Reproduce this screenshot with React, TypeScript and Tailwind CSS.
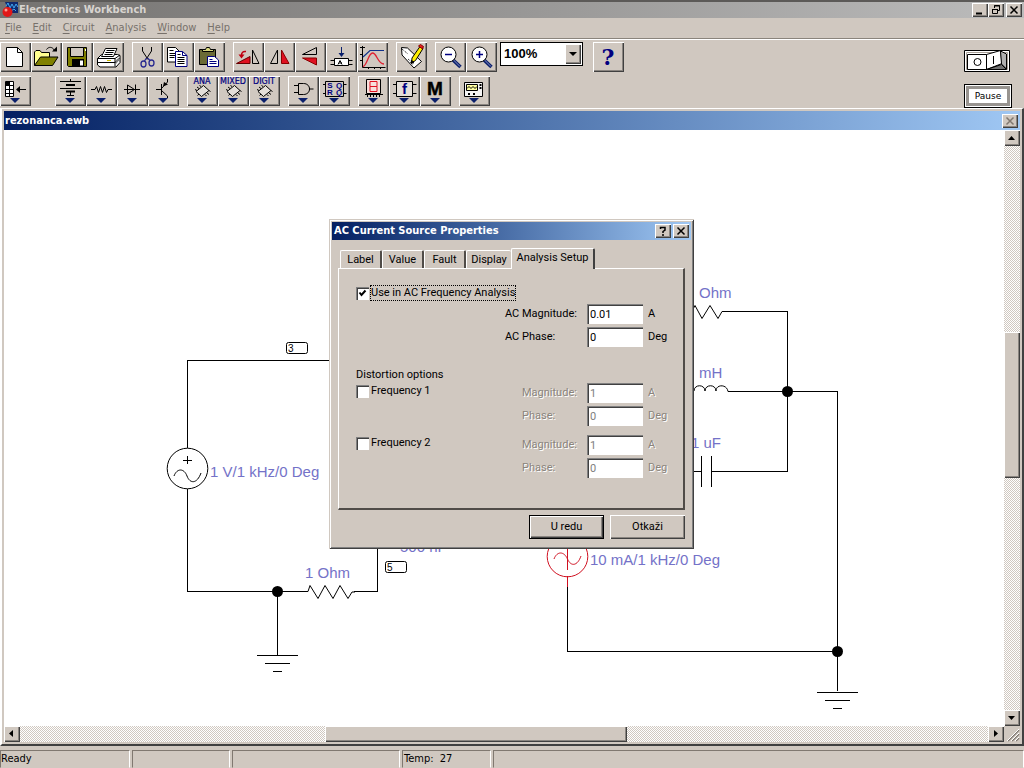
import { useId, useState } from 'react';
import type { ReactNode } from 'react';

const RAISED =
  'bg-[#d0c8c0] shadow-[inset_1px_1px_0_#fff,inset_-1px_-1px_0_#404040,inset_-2px_-2px_0_#8a8580]';
const UI_FONT = "font-['DejaVu_Sans_Condensed',Tahoma,sans-serif]";
const DITHER =
  'bg-[repeating-conic-gradient(#ffffff_0_25%,#d0c8c0_0_50%)] bg-[length:2px_2px]';

function Tool({ label, children }: { label: string; children: ReactNode }) {
  return (
    <button type="button" aria-label={label} className={`h-[30px] w-[31px] shrink-0 ${RAISED}`}>
      <svg viewBox="0 0 31 30" className="block h-[30px] w-[31px]" fill="none" stroke="#000" strokeWidth="1">
        {children}
      </svg>
    </button>
  );
}

function PartTool({ label, children }: { label: string; children: ReactNode }) {
  return (
    <Tool label={label}>
      {children}
      <path d="M10 22h10l-5 5z" fill="#0a1f6b" stroke="none" />
    </Tool>
  );
}

function Group({ children }: { children: ReactNode }) {
  return <div className="flex">{children}</div>;
}

function Chip({ caption }: { caption: string }) {
  return (
    <>
      <text x="15" y="8" textAnchor="middle" fontSize="8" fill="#000080" stroke="#000080" strokeWidth="0.200" fontFamily="DejaVu Sans">
        {caption}
      </text>
      <path d="M16.500 9.500l5.500 5-7.500 6-5.500-5z" fill="#e4dfda" />
      <path d="M12 12.500l-2-1.500M10 14.500l-2-1M14 10.500l-1.500-1M20 17l2 1.500M22 14.500l1.500 1M18 18.500l1.500 1.500M12 18l-1.500 1.500" />
    </>
  );
}

function MainTools() {
  return (
    <div className="flex gap-2">
      <Group>
        <Tool label="New">
          <path d="M6.500 5.500h11l5 5v14h-16z" fill="#fff" />
          <path d="M17.500 5.500v5h5" />
        </Tool>
        <Tool label="Open">
          <path d="M3.500 23.500V10l1.500-1.500h4l1.500 2h8v5" fill="#ffff90" />
          <path d="M3.500 23.500l6-8.500h17.500l-5.500 8.500z" fill="#808000" />
          <path d="M15.500 7.500c2-3 6-3 8 1" />
          <path d="M26 4.500v5h-5z" fill="#000" stroke="none" />
        </Tool>
        <Tool label="Save">
          <path d="M5.500 5.500h19v19h-18l-1-1z" fill="#808000" />
          <path d="M8.500 5.500h13v9h-13z" fill="#d0c8c0" />
          <path d="M10 17h12v7.500H10z" fill="#000" stroke="none" />
          <path d="M18 18.500h3v5h-3zM23 7h1v2h-1z" fill="#fff" stroke="none" />
        </Tool>
        <Tool label="Print">
          <path d="M4.500 16.500l4-4h16l2.500 1v7l-4 4.500h-16l-2.500-2z" fill="#fff" />
          <path d="M4.500 16.500h17.500l5-3.500M22 16.500v8" />
          <path d="M8.500 14.500l4-8h11.500l-3.500 8z" fill="#fff" />
          <path d="M13.500 8.500h8M12.500 10.500h8M11.500 12.500h8" />
          <path d="M5 20.500h17l4.500-4" />
          <path d="M23 18l3-2.500v3L23 22z" fill="#808080" stroke="none" />
          <path d="M14 18.500h4" stroke="#d0c000" />
        </Tool>
      </Group>
      <Group>
        <Tool label="Cut">
          <path d="M10.500 5v4l5.500 8.500M19.500 5v4l-5.500 8.500" />
          <g stroke="#2a2a90" strokeWidth="1.300">
            <path d="M15.500 16l2.500 2.500M14.500 16l-2 3" />
            <ellipse cx="11.500" cy="22" rx="2.500" ry="3" />
            <ellipse cx="19.500" cy="21" rx="2.500" ry="3" />
          </g>
        </Tool>
        <Tool label="Copy">
          <path d="M4.500 5.500h8l3.500 3.500v11H4.500z" fill="#fff" />
          <path d="M6.500 8.500h4M6.500 11.500h7M6.500 13.500h7M6.500 15.500h5" />
          <path d="M12.500 9.500h7l4.500 4v11H12.500z" fill="#fff" stroke="#000080" />
          <path d="M19.500 9.500v4h4.500" stroke="#000080" />
          <path d="M14.500 12.500h3M14.500 15.500h7M14.500 17.500h7M14.500 19.500h7M14.500 21.500h7" />
        </Tool>
        <Tool label="Paste">
          <path d="M5.500 7.500h16v15h-16z" fill="#6b6b35" />
          <path d="M8.500 9.500v-2h3l1-2h3l1 2h3v2z" fill="#d8d880" />
          <path d="M13.500 14.500h7l4 3.500v6.500h-11z" fill="#fff" stroke="#000080" />
          <path d="M15.500 17.500h3M15.500 19.500h7M15.500 21.500h7" stroke="#000080" />
        </Tool>
      </Group>
      <Group>
        <Tool label="Rotate">
          <path d="M3.500 21.500l13.500-7v7z" fill="#e01020" stroke="#600" />
          <path d="M19.500 8v13.500h6.500z" />
          <path d="M13 9.500c-3-.5-4.500 1-4.500 4" stroke="#c00010" strokeWidth="1.500" />
          <path d="M5.500 12.500h6l-3 4z" fill="#c00010" stroke="none" />
        </Tool>
        <Tool label="Flip Horizontal">
          <path d="M13.500 8v13.500h-7z" />
          <path d="M17.500 8v13.500h7.500z" fill="#e01020" stroke="#800" />
        </Tool>
        <Tool label="Flip Vertical">
          <path d="M21.500 5.500v7h-14z" />
          <path d="M21.500 23v-7h-14z" fill="#e01020" stroke="#800" />
        </Tool>
        <Tool label="Component Properties">
          <path d="M15.500 5v8" stroke="#0a1f6b" />
          <path d="M12.500 11h6l-3 4z" fill="#0a1f6b" stroke="none" />
          <path d="M8.500 16.500h14v7h-14zM4.500 18.500h4M4.500 22.500h4M22.500 18.500h4M22.500 22.500h4" fill="#fff" />
          <path d="M12 22.500l2-4 2 4M13 21h3" />
        </Tool>
        <Tool label="Display Graphs">
          <path d="M5.500 4v21.500h23M3 5.500h5M3 12.500h2M3 18.500h2M11.500 25v2M17.500 25v2M23.500 25v2" />
          <path d="M6 15l7-6.500h14" stroke="#10308a" strokeWidth="1.200" />
          <path d="M6 24.500c4-1 5.500-13.500 9.500-13.500 4.500 0 5 11 11.500 11" stroke="#e02030" strokeWidth="1.300" />
        </Tool>
      </Group>
      <Group>
        <Tool label="Description">
          <path d="M5.500 5.500l6 .5 14 13.500-7.500 6.500L6 13z" fill="#fff" />
          <path d="M6 7l6 5M12 17l6 5M14 20l3 3" strokeDasharray="1 1" />
          <path d="M24 4.500l3 2-7.500 12-4 2.500.5-5z" fill="#ffef00" />
          <path d="M22.500 4l2-1.500 3 2-1 2.500z" fill="#e02020" stroke="#800" />
          <path d="M15.500 18.500v3l2.500-1.500z" fill="#000" />
        </Tool>
      </Group>
      <div className="mr-0.5 flex gap-[3px]">
        <Group>
          <Tool label="Zoom Out">
            <path d="M17.500 17.500l8 7.500" stroke="#0a1f6b" strokeWidth="3.500" />
            <path d="M18 17.500l7 7" stroke="#8890c8" />
            <circle cx="13.500" cy="12.500" r="7.500" fill="#fff" />
            <path d="M10 12.500h7" stroke="#000080" strokeWidth="1.500" />
          </Tool>
          <Tool label="Zoom In">
            <path d="M17.500 17.500l8 7.500" stroke="#0a1f6b" strokeWidth="3.500" />
            <path d="M18 17.500l7 7" stroke="#8890c8" />
            <circle cx="13.500" cy="12.500" r="7.500" fill="#fff" />
            <path d="M10 12.500h7M13.500 9v7" stroke="#000080" strokeWidth="1.500" />
          </Tool>
        </Group>
        <div className="relative h-6 w-[83px]">
          <select
            aria-label="Zoom"
            className="block h-6 w-full appearance-none border border-black bg-white pl-[3px] font-['Liberation_Sans',sans-serif] text-[13px] leading-4 font-bold text-black"
          >
            <option>100%</option>
            <option>80%</option>
            <option>50%</option>
          </select>
          <span className={`pointer-events-none absolute top-0.5 right-0.5 flex h-5 w-4 items-center justify-center ${RAISED}`}>
            <svg viewBox="0 0 8 4" className="h-1 w-2">
              <path d="M0 0h8L4 4z" />
            </svg>
          </span>
        </div>
      </div>
      <Tool label="Help">
        <text x="15" y="23" textAnchor="middle" fontSize="22" fontWeight="700" fill="#000080" stroke="none" fontFamily="DejaVu Serif">
          ?
        </text>
      </Tool>
    </div>
  );
}

function PartTools() {
  return (
    <div className="flex gap-2">
      <div className="mr-4">
        <PartTool label="Favorites">
          <path d="M5.500 5.500h8v15h-8zM9.500 5.500v15M5.500 9.500h8M5.500 13.500h8M5.500 17.500h8" fill="#fff" />
          <path d="M6 6h3v3H6z" fill="#000" />
          <path d="M18 13.500h8" />
          <path d="M16 13.500l4-3.500v7z" fill="#000" stroke="none" />
        </PartTool>
      </div>
      <Group>
        <PartTool label="Sources">
          <path d="M15.500 3v2.500M5 5.500h21M5 12.500h21M15.500 15v4" />
          <path d="M11 9h9M11 15.500h9" strokeWidth="2" />
          <path d="M12 19.500h7" />
        </PartTool>
        <PartTool label="Basic">
          <path d="M5 13.500h4l1.500-3 2 6 2-6 2 6 2-6 2 6 1.500-3h4" />
        </PartTool>
        <PartTool label="Diodes">
          <path d="M7 13.500h16M10.500 9v9l7-4.500zM18.500 8.500v10" />
        </PartTool>
        <PartTool label="Transistors">
          <path d="M13.500 8v11M8 13.500h5.500M13.500 12.500l6-6.500V3M13.500 14.500l6 5.500v2" />
          <path d="M15 10.500l1-4.500 4 2.500z" fill="#000" stroke="none" />
        </PartTool>
      </Group>
      <Group>
        <PartTool label="Analog ICs"><Chip caption="ANA" /></PartTool>
        <PartTool label="Mixed ICs"><Chip caption="MIXED" /></PartTool>
        <PartTool label="Digital ICs"><Chip caption="DIGIT" /></PartTool>
      </Group>
      <Group>
        <PartTool label="Logic Gates">
          <path d="M10.500 7.500h5c8 0 8 11 0 11h-5zM6 9.500h4.500M6 16.500h4.500M21.500 13h4" />
        </PartTool>
        <PartTool label="Digital">
          <path d="M6.500 5.500h18v15h-18zM4 8.500h2.500M4 17.500h2.500M24.500 8.500h3M24.500 17.500h3" />
          <g fontSize="8" fontWeight="700" fill="#000080" stroke="none" fontFamily="Liberation Sans" textAnchor="middle">
            <text x="11" y="12">S</text>
            <text x="20" y="12">Q</text>
            <text x="11" y="19">R</text>
            <text x="20" y="19">Q</text>
          </g>
        </PartTool>
      </Group>
      <Group>
        <PartTool label="Indicators">
          <path d="M8.500 3.500h14v14h-14z" fill="#f8e0dc" />
          <path d="M12 5.500h7v5h-7zM12 10.500h7v5h-7z" stroke="#e01020" />
          <path d="M7 18.500h18M9.500 19v2M12.500 19v2M15.500 19v2M18.500 19v2M21.500 19v2" />
        </PartTool>
        <PartTool label="Controls">
          <path d="M7.500 5.500h16v15h-16zM4 8.500h3.500M4 17.500h3.500M23.500 8.500h4M23.500 17.500h4" fill="#e4dfda" />
          <text x="15.500" y="18" textAnchor="middle" fontSize="15" fontWeight="700" fill="#000080" stroke="none" fontFamily="Liberation Sans">
            f
          </text>
        </PartTool>
        <PartTool label="Miscellaneous">
          <text x="15" y="19" textAnchor="middle" fontSize="19" fontWeight="700" fill="#000" stroke="#000" strokeWidth="0.500" fontFamily="Liberation Sans">
            M
          </text>
        </PartTool>
      </Group>
      <PartTool label="Instruments">
        <path d="M5.500 6.500h18v14h-18z" fill="#f4f4f4" />
        <path d="M7.500 8.500h11v6h-11z" fill="#ffffa0" />
        <path d="M8 12.500l2-2 2 2 2-2 2 2 2-2" />
        <path d="M20.500 9h2M20.500 12h2M9 18h2M14 18h2" strokeWidth="2" />
      </PartTool>
    </div>
  );
}

function CaptionButton({ label, children, muted }: { label: string; children: ReactNode; muted?: boolean }) {
  return (
    <button type="button" aria-label={label} className={`h-3.5 w-4 shrink-0 ${RAISED}`}>
      <svg viewBox="0 0 16 14" className="block h-3.5 w-4" fill="none" stroke={muted ? '#807870' : '#000'}>
        {children}
      </svg>
    </button>
  );
}

const CROSS = <path d="M4.500 3.500l7 7M11.500 3.500l-7 7" strokeWidth="1.500" />;

function ScrollArrow({ label, d }: { label: string; d: string }) {
  return (
    <button type="button" aria-label={label} className={`h-4 w-4 shrink-0 ${RAISED}`}>
      <svg viewBox="0 0 16 16" className="block h-4 w-4">
        <path d={d} />
      </svg>
    </button>
  );
}

function Circuit() {
  return (
    <svg
      viewBox="4 130 1000 596"
      className="block h-[596px] w-[1000px] shrink-0"
      fill="none"
      stroke="#000"
      strokeWidth="1"
      fontFamily="Liberation Sans, Arial, sans-serif"
    >
      <g shapeRendering="crispEdges">
        <path d="M340 360.500H187.500V448M187.500 489v102.500H308M354 591.500h23.500V540M277.500 591v64M257 655.500h41M265 663.500h25M273 671.500h9" />
        <path d="M725 311.500h62.500v160H712M728 391.500h109.500V691M817 692.500h41M825 700.500h25M833 708.500h9M680 471.500h21M701.500 456v31M711.500 456v31M567.500 587v64.500H837" />
        <path d="M187.500 456v8M183 460.500h9" />
        <path d="M567.500 540v30M567.500 576v11" stroke="#d01020" />
      </g>
      <path d="M308 591.500l2-6 8 13 7-13 8 13 7-13 8 13 4-6.500h3M678 311.500l2-6 8 13 7-13 7 13 8-13 8 13 4-7h3" />
      <path d="M694 391c0-7 11-7 11 0c0-7 11-7 11 0c0-7 11-7 12 .5" />
      <circle cx="187.500" cy="468.500" r="20.300" />
      <path d="M174 476c3-8 10-8 13 0s10 8 14-3" />
      <g stroke="#d01020">
        <circle cx="567.500" cy="556.500" r="20.300" />
        <path d="M554 559c3-8 10-8 13.500 0s10 7 13.500-3" />
      </g>
      <g fill="#000" stroke="none">
        <circle cx="277.500" cy="591.500" r="5.500" />
        <circle cx="787.500" cy="391.500" r="5.500" />
        <circle cx="837.500" cy="651.500" r="5.500" />
      </g>
      <rect x="286.500" y="342.500" width="21" height="11" rx="2" />
      <rect x="385.500" y="561.500" width="21" height="11" rx="2" />
      <g fill="#000" stroke="none" fontSize="10">
        <text x="288" y="352">3</text>
        <text x="387" y="571">5</text>
      </g>
      <g fill="#7472c8" stroke="none" fontSize="15" className="whitespace-pre">
        <text x="210" y="477">1 V/1 kHz/0 Deg</text>
        <text x="305" y="578">{'1  Ohm'}</text>
        <text x="400" y="552">500 nF</text>
        <text x="590" y="565">10 mA/1 kHz/0 Deg</text>
        <text x="699" y="298">Ohm</text>
        <text x="699" y="378">mH</text>
        <text x="691" y="448">1 uF</text>
      </g>
    </svg>
  );
}

function Field({ label, unit, value, disabled, wide }: { label: string; unit: string; value: string; disabled?: boolean; wide?: boolean }) {
  const id = useId();
  const tone = disabled ? 'text-[#8a847c] [text-shadow:1px_1px_0_#fff]' : 'text-black';
  return (
    <div className="flex h-5 items-center">
      <label htmlFor={id} className={`${wide ? 'w-[82px]' : 'w-[65px]'} whitespace-nowrap ${tone}`}>
        {label}
      </label>
      <input
        id={id}
        type="text"
        defaultValue={value}
        disabled={disabled}
        className={`h-5 w-14 bg-white pl-[3px] shadow-[inset_1px_1px_0_#808080,inset_2px_2px_0_#404040,inset_-1px_-1px_0_#fff] ${
          disabled ? 'text-[#808080]' : 'text-black'
        }`}
      />
      <span className={`w-10 pl-[5px] ${tone}`}>{unit}</span>
    </div>
  );
}

function Check({ label, checked, focused }: { label: string; checked?: boolean; focused?: boolean }) {
  return (
    <label className="flex h-4 items-center gap-px">
      <span className="relative block h-[13px] w-[13px]">
        <input
          type="checkbox"
          defaultChecked={checked}
          className="peer block h-[13px] w-[13px] appearance-none bg-white shadow-[inset_1px_1px_0_#808080,inset_2px_2px_0_#404040,inset_-1px_-1px_0_#fff]"
        />
        <svg viewBox="0 0 13 13" className="pointer-events-none absolute inset-0 hidden h-[13px] w-[13px] peer-checked:block" fill="none">
          <path d="M3.500 5.500L5.500 8l4-4.500" stroke="#000" strokeWidth="2" />
        </svg>
      </span>
      <span className={`border border-dotted leading-[14px] whitespace-nowrap ${focused ? 'border-black' : 'border-transparent'}`}>{label}</span>
    </label>
  );
}

const TABS = ['Label', 'Value', 'Fault', 'Display', 'Analysis Setup'];

function PropertiesDialog() {
  const [tab, setTab] = useState('Analysis Setup');
  return (
    <section
      role="dialog"
      aria-labelledby="dialog-title"
      className="absolute top-[219px] left-[329px] w-[365px] bg-[#d0c8c0] p-[3px] pb-2.5 font-[Roboto,'Liberation_Sans',Arial,sans-serif] text-[11px] leading-4 text-black shadow-[inset_1px_1px_0_#d0c8c0,inset_-1px_-1px_0_#404040,inset_2px_2px_0_#fff,inset_-2px_-2px_0_#808080]"
    >
      <header className="flex h-[18px] items-center gap-0.5 bg-linear-to-r from-[#051f62] to-[#a0c8f4] pr-0.5 pl-0.5">
        <h2 id="dialog-title" className={`flex-1 text-[11px] font-bold text-white ${UI_FONT}`}>
          AC Current Source Properties
        </h2>
        <CaptionButton label="Context help">
          <path d="M5.500 5V3.500h4.500V6L8 7.500V9M8 10v2" strokeWidth="1.500" />
        </CaptionButton>
        <CaptionButton label="Close">{CROSS}</CaptionButton>
      </header>
      <div className="px-1.5">
        <div role="tablist" className="flex h-7 items-end pl-0.5">
          {TABS.map((name) => {
            const on = name === tab;
            return (
              <button
                key={name}
                type="button"
                role="tab"
                aria-selected={on}
                onClick={() => setTab(name)}
                className={`rounded-t-[2px] border-t border-l border-white bg-[#d0c8c0] ${
                  on
                    ? 'relative -mb-px h-[21px] w-[84px] border-r-2 border-r-[#404040] pb-0.5'
                    : name === 'Display'
                      ? 'h-[18px] w-[45px]'
                      : 'h-[18px] w-[42px] border-r-2 border-r-[#504c48]'
                }`}
              >
                {name}
              </button>
            );
          })}
        </div>
        <div role="tabpanel" className="border border-r-2 border-b-2 border-white border-r-[#504c48] border-b-[#504c48] pt-4 pb-[21px] pl-[17px]">
          <Check label="Use in AC Frequency Analysis" checked focused />
          <div className="mt-[3px] flex flex-col items-end gap-[3px]">
            <Field wide label="AC Magnitude:" unit="A" value="0.01" />
            <Field wide label="AC Phase:" unit="Deg" value="0" />
          </div>
          <p className="mt-5">Distortion options</p>
          {['Frequency 1', 'Frequency 2'].map((name) => (
            <div key={name} className="mb-[9px] flex justify-between">
              <Check label={name} />
              <div className="flex flex-col gap-[3px]">
                <Field disabled label="Magnitude:" unit="A" value="1" />
                <Field disabled label="Phase:" unit="Deg" value="0" />
              </div>
            </div>
          ))}
        </div>
        <div className="mt-[5px] flex justify-end gap-1.5">
          <button type="button" className="h-6 w-[75px] border border-black bg-[#d0c8c0] shadow-[inset_1px_1px_0_#fff,inset_-1px_-1px_0_#404040,inset_-2px_-2px_0_#8a8580]">
            U redu
          </button>
          <button type="button" className={`h-6 w-[75px] ${RAISED}`}>
            Otkaži
          </button>
        </div>
      </div>
    </section>
  );
}

const PANEL = 'border border-[#807870] border-r-white border-b-transparent h-full whitespace-pre';

export default function App() {
  return (
    <div className={`relative flex h-screen flex-col overflow-hidden bg-[#d0c8c0] text-[11px] leading-4 text-black select-none ${UI_FONT}`}>
      <header className="flex h-[18px] shrink-0 items-center border-t-2 border-[#5c5a58] bg-linear-to-r from-[#747270] to-[#bcbcbc] pr-0.5 pl-0.5">
        <svg viewBox="0 0 17 16" className="h-4 w-[17px]">
          <path d="M3 0h13v11H7z" fill="#102a70" />
          <path d="M4 4l2-3 2 5 2-4 2 4 2-4 2 3M9 9l3-2 2 2" stroke="#40a8f0" fill="none" />
          <circle cx="5.500" cy="10" r="5" fill="#e01818" />
          <circle cx="4" cy="8" r="1.500" fill="#ff9c90" />
        </svg>
        <h1 className="flex-1 text-[11px] font-bold text-[#d8d4d0]">Electronics Workbench</h1>
        <CaptionButton label="Minimize">
          <path d="M4 10.500h6" strokeWidth="2" />
        </CaptionButton>
        <CaptionButton label="Restore">
          <path d="M6.500 5V2.500h5v5H10M4.500 6.500h5v4h-5zM6 3h6M4 6.500h6" />
        </CaptionButton>
        <span className="w-0.5" />
        <CaptionButton label="Close">{CROSS}</CaptionButton>
      </header>

      <nav className="flex h-[21px] shrink-0 items-center gap-[11px] border-b border-[#8a847c] pl-[5px] text-[#77716b]">
        {['File', 'Edit', 'Circuit', 'Analysis', 'Window', 'Help'].map((item) => (
          <a key={item} href="#" className="underline-offset-2">
            <span className="underline">{item[0]}</span>
            {item.slice(1)}
          </a>
        ))}
      </nav>

      <div className="flex h-[69px] shrink-0 justify-between border-t border-white pr-3">
        <div className="flex flex-col gap-1 pt-0.5">
          <MainTools />
          <PartTools />
        </div>
        <div className="flex flex-col gap-3 pt-[10px]">
          <button type="button" aria-label="Power switch" className="h-[22px] w-[46px]">
            <svg viewBox="0 0 46 22" className="block h-[22px] w-[46px]" stroke="#000" fill="none">
              <path d="M.5.500h45v21H.500z" fill="#fff" />
              <path d="M2.500 2.500h41v17h-41z" stroke="#a8a098" />
              <path d="M3.500 4.500h19v15h-19z" fill="#fff" />
              <path d="M22.500 4.500l14-4 1.500 13-15.500 6z" fill="#fff" />
              <path d="M36.500 1l6 3v15l-5-5z" fill="#b0b0b0" />
              <path d="M22.500 19.500l15-5 5 5z" fill="#707070" />
              <circle cx="13.500" cy="12" r="3.500" />
              <path d="M29.500 6v8" />
            </svg>
          </button>
          <button type="button" className="h-6 w-12 border border-black bg-white shadow-[inset_0_0_0_1px_#fff,inset_0_0_0_4px_#989490] font-['DejaVu_Sans',sans-serif] text-[9px] leading-4">
            Pause
          </button>
        </div>
      </div>

      <main className="flex min-h-0 flex-1 flex-col border-t border-l-2 border-r-2 border-b-2 border-white border-r-[#404040] border-b-[#404040] pt-0.5 pr-0.5 pb-0.5 pl-0.5">
        <header className="flex h-[19px] shrink-0 items-center bg-linear-to-r from-[#051f62] to-[#a0c8f4] pr-0.5 pl-px">
          <h2 className="flex-1 text-[11px] font-bold text-white">rezonanca.ewb</h2>
          <CaptionButton label="Close document" muted>{CROSS}</CaptionButton>
        </header>
        <div className="flex min-h-0 flex-1">
          <div className="min-w-0 flex-1 overflow-hidden bg-white">
            <Circuit />
          </div>
          <div className={`flex w-4 shrink-0 flex-col ${DITHER}`}>
            <ScrollArrow label="Scroll up" d="M4 10h7L7.500 6z" />
            <div className="grow-[186]" />
            <div className={`grow-[146] ${RAISED}`} />
            <div className="grow-[232]" />
            <ScrollArrow label="Scroll down" d="M4 6h7l-3.500 4z" />
          </div>
        </div>
        <div className="flex h-4 shrink-0">
          <div className={`flex flex-1 ${DITHER}`}>
            <ScrollArrow label="Scroll left" d="M9 4v7L5 7.500z" />
            <div className="grow-[305]" />
            <div className={`grow-[302] ${RAISED}`} />
            <div className="grow-[361]" />
            <ScrollArrow label="Scroll right" d="M6 4v7l4-3.500z" />
          </div>
          <svg viewBox="0 0 16 16" className="h-4 w-4" stroke="#807870">
            <path d="M4 15L15 4M8 15l7-7M12 15l3-3" strokeWidth="1.500" />
            <path d="M3 15L15 3M7 15l8-8M11 15l4-4" stroke="#fff" />
          </svg>
        </div>
      </main>

      <footer className="flex h-[22px] shrink-0 gap-0.5 pt-1">
        <div className={`w-[130px] ${PANEL}`}>Ready</div>
        <div className={`w-[98px] ${PANEL}`} />
        <div className={`w-[168px] ${PANEL}`} />
        <div className={`w-[89px] pl-px ${PANEL}`}>Temp:  27</div>
        <div className={`flex-1 ${PANEL}`} />
      </footer>

      <PropertiesDialog />
    </div>
  );
}
